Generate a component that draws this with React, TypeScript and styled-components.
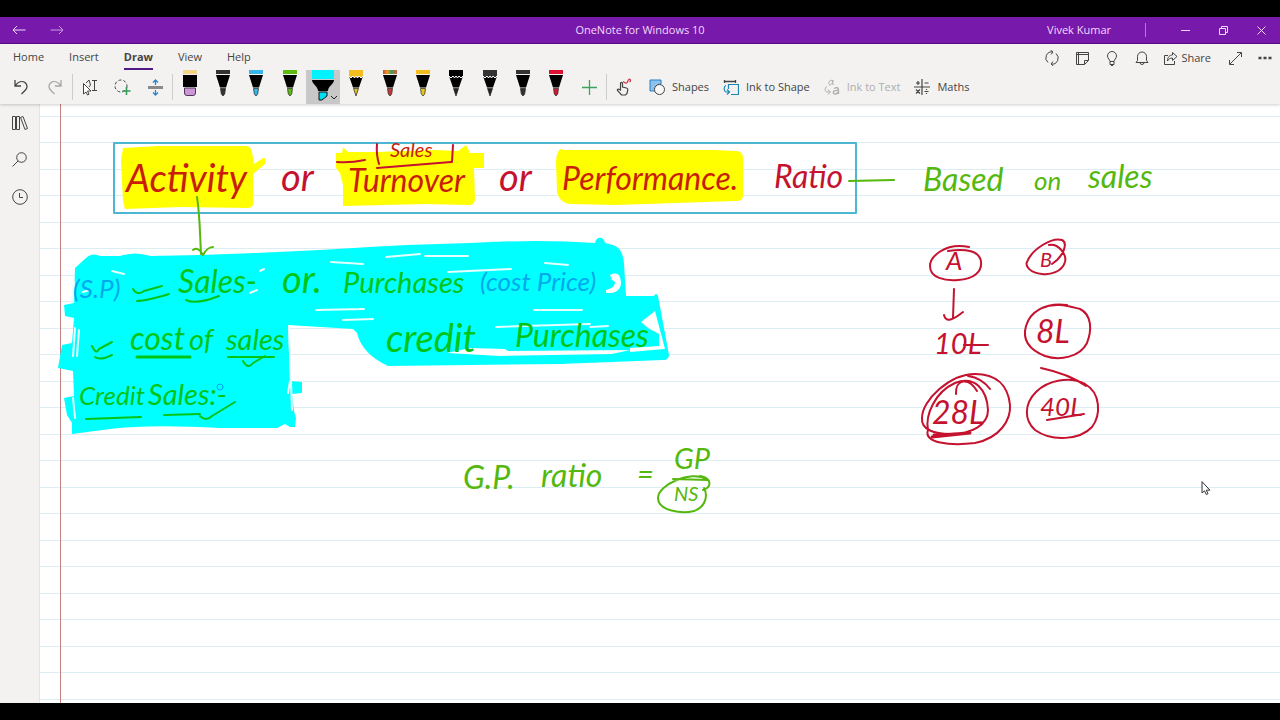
import React from "react";
import styled, { createGlobalStyle } from "styled-components";

const GlobalStyle = createGlobalStyle`
  * { box-sizing: border-box; }
  body { margin: 0; background: #000; }
  button { font: inherit; color: inherit; background: none; border: 0; padding: 0; margin: 0; }
  svg { display: block; flex: none; }
`;

const Screen = styled.div`
  min-height: 100vh;
  padding: 17px 0;
  display: flex;
  flex-direction: column;
  background: #000;
  color: #444;
  font: 11px/16px "Open Sans", "Noto Sans", sans-serif;
`;

const TitleBar = styled.header`
  display: grid;
  grid-template-columns: 1fr auto 1fr;
  align-items: center;
  height: 27px;
  background: #7719aa;
  border-bottom: 1px solid #5a0d86;
  color: #f3d9ff;
`;

const TitleSide = styled.div<{ $end?: boolean }>`
  display: flex;
  align-items: center;
  justify-content: ${(p) => (p.$end ? "flex-end" : "flex-start")};
`;

const AppTitle = styled.h1`
  margin: 0;
  font-size: 11px;
  font-weight: 400;
`;

const TitleButton = styled.button<{ $dim?: boolean }>`
  display: grid;
  place-items: center;
  width: 38px;
  height: 26px;
  opacity: ${(p) => (p.$dim ? 0.7 : 1)};
`;

const Account = styled.button`
  padding: 0 34px 0 0;
  border-right: 1px solid #b47ad2;
  margin-right: 20px;
  line-height: 14px;
`;

const Ribbon = styled.div`
  position: relative;
  background: #f3f2f1;
  box-shadow: 0 1px 3px #0003;
  z-index: 1;
`;

const RibbonRow = styled.div`
  display: flex;
  justify-content: space-between;
  height: 26px;
`;

const Tabs = styled.nav`
  display: flex;
  gap: 25px;
  padding-left: 13px;
`;

const Tab = styled.button<{ $active?: boolean }>`
  padding-top: 2px;
  font-weight: ${(p) => (p.$active ? 700 : 400)};
  border-bottom: 2px solid ${(p) => (p.$active ? "#4f1a84" : "transparent")};
`;

const Actions = styled.div`
  display: flex;
  align-items: center;
  padding-top: 2px;
`;

const IconButton = styled.button<{ $width?: number; $faded?: boolean }>`
  display: grid;
  place-items: center;
  width: ${(p) => p.$width ?? 30}px;
  height: 100%;
  color: ${(p) => (p.$faded ? "#a5a5a5" : "#444")};
`;

const ShareButton = styled.button`
  display: flex;
  align-items: center;
  gap: 3px;
  padding: 0 9px 0 7px;
`;

const ToolRow = styled.div`
  display: flex;
  height: 34px;
  padding-left: 4px;
`;

const Divider = styled.span`
  width: 1px;
  margin: 4px 0;
  background: #ccc;
`;

const Pens = styled.div`
  display: flex;
  width: 400px;
`;

const PenButton = styled.button<{ $selected?: boolean }>`
  position: relative;
  flex: 1;
  display: flex;
  justify-content: center;
  align-items: flex-start;
  background: ${(p) => (p.$selected ? "#c8c8c8" : "none")};
`;

const PenChevron = styled.svg`
  position: absolute;
  right: 2px;
  bottom: 3px;
`;

const ToolButton = styled.button`
  display: flex;
  align-items: center;
  gap: 7px;
  padding: 0 5px 0 9px;
  white-space: nowrap;
  &:disabled { color: #adadad; }
`;

const Workspace = styled.div`
  flex: 1;
  display: flex;
  min-height: 0;
`;

const Sidebar = styled.aside`
  flex: none;
  display: flex;
  flex-direction: column;
  align-items: center;
  width: 40px;
  background: #f3f2f1;
  border-right: 1px solid #e4e4e4;
`;

const SideButton = styled.button`
  display: grid;
  place-items: center;
  width: 100%;
  height: 37px;
`;

const NotePage = styled.main`
  flex: 1;
  min-width: 0;
  overflow: hidden;
  background:
    linear-gradient(#c8807c, #c8807c) 20px 0 / 1px 100% no-repeat,
    linear-gradient(#dcedf3 1px, transparent 1px) 0 12px / 100% 53px,
    linear-gradient(#dcedf3 1px, transparent 1px) 0 38px / 100% 53px,
    #fff;
`;

const Ink = styled.svg`
  fill: none;
  stroke-linecap: round;
  stroke-linejoin: round;
`;

const Word = styled.text<{ $size: number; $ink: string }>`
  font-family: Lato, "Open Sans", sans-serif;
  font-style: italic;
  font-size: ${(p) => p.$size}px;
  fill: ${(p) => p.$ink};
`;

type IconProps = { w?: number; h?: number; children: React.ReactNode };

const Icon = ({ w = 16, h = 16, children }: IconProps) => (
  <svg width={w} height={h} viewBox={`0 0 ${w} ${h}`} fill="none" stroke="currentColor" strokeWidth="1" aria-hidden="true">
    {children}
  </svg>
);

type PenKind = "eraser" | "pen" | "pencil" | "marker";
type PenSpec = { name: string; kind: PenKind; cap: string; tip: string };

const pens: PenSpec[] = [
  { name: "Eraser", kind: "eraser", cap: "#f3d68a", tip: "#cd97d6" },
  { name: "Black pen", kind: "pen", cap: "#333", tip: "#333" },
  { name: "Blue pen", kind: "pen", cap: "#38b5e6", tip: "#38b5e6" },
  { name: "Green pen", kind: "pen", cap: "#5dbb10", tip: "#5dbb10" },
  { name: "Cyan highlighter", kind: "marker", cap: "#00f4ff", tip: "#00dff0" },
  { name: "Yellow pencil", kind: "pencil", cap: "#f2bd1d", tip: "#e0c020" },
  { name: "Rainbow pen", kind: "pen", cap: "url(#rainbow)", tip: "#c33a3a" },
  { name: "Yellow pen", kind: "pen", cap: "#f2bd1d", tip: "#e8c61c" },
  { name: "Black pencil", kind: "pencil", cap: "#000", tip: "#222" },
  { name: "Grey pencil", kind: "pencil", cap: "#333", tip: "#222" },
  { name: "Dark pen", kind: "pen", cap: "#333", tip: "#333" },
  { name: "Red pen", kind: "pen", cap: "#e01233", tip: "#d01830" },
];

const PenPicture = ({ kind, cap, tip }: PenSpec) => {
  if (kind === "marker") {
    return (
      <svg width="26" height="32" viewBox="0 0 26 32" aria-hidden="true">
        <path d="M2 0h22v9H2z" fill={cap} />
        <path d="M2 10h22c0 4-6 6-6 11H8C8 16 2 14 2 10z" fill="#000" />
        <path d="M9 22h8v4l-5 4H9z" fill={tip} stroke="#111" />
      </svg>
    );
  }
  if (kind === "eraser") {
    return (
      <svg width="14" height="27" viewBox="0 0 14 27" aria-hidden="true">
        <path d="M0 0h14v4H0z" fill={cap} />
        <path d="M0 5h14v12H0z" fill="#000" />
        <path d="M1.500 18h11v5q0 2.500-2.500 2.500H4q-2.500 0-2.500-2.500z" fill={tip} stroke="#51355a" />
      </svg>
    );
  }
  return (
    <svg width="14" height="27" viewBox="0 0 14 27" aria-hidden="true">
      <defs>
        <linearGradient id="rainbow">
          <stop offset="0" stopColor="#e23b30" />
          <stop offset=".3" stopColor="#e0a020" />
          <stop offset=".6" stopColor="#3f9a60" />
          <stop offset="1" stopColor="#d9603a" />
        </linearGradient>
      </defs>
      <path d="M0 0h14v4H0z" fill={cap} />
      {kind === "pen" && <path d="M0 5h14l-4 12.500H4z" fill="#000" />}
      {kind === "pencil" && (
        <>
          <path d="M0 3h14v3l-4 11.500H4L0 6z" fill="#000" />
          <path d="M0 3h14v3l-2 2-2-2-1.500 2L7 6 5.500 8 4 6 2 8 0 6z" fill={cap} />
          <path d="M0 6l2 2 2-2 1.500 2L7 6l1.500 2L10 6l2 2 2-2" fill="none" stroke="#fff" />
        </>
      )}
      {kind === "pen" ? (
        <path d="M4.500 18.500h5l-.8 5.500-1.700 2-1.700-2z" fill={tip} stroke="#222" strokeWidth=".7" />
      ) : (
        <path d="M4.500 18.500h5L7 26z" fill={tip} stroke="#222" strokeWidth=".7" />
      )}
    </svg>
  );
};

const RED = "#c4122f";
const RED_ON_YELLOW = "#c81e0a";
const GREEN = "#55b80e";
const GREEN_ON_CYAN = "#00c416";
const BLUE_ON_CYAN = "#00a8ee";

type WordSpec = [text: string, x: number, y: number, size: number, ink: string];

const words: WordSpec[] = [
  ["Activity", 126, 192, 38, RED_ON_YELLOW],
  ["or", 281, 191, 38, RED],
  ["Sales", 390, 157, 20, RED_ON_YELLOW],
  ["Turnover", 348, 192, 32, RED_ON_YELLOW],
  ["or", 499, 191, 38, RED],
  ["Performance.", 562, 190, 32, RED_ON_YELLOW],
  ["Ratio", 774, 188, 32, RED],
  ["Based", 923, 191, 32, GREEN],
  ["on", 1034, 190, 26, GREEN],
  ["sales", 1088, 188, 32, GREEN],
  ["(S.P)", 73, 298, 26, BLUE_ON_CYAN],
  ["Sales-", 178, 293, 32, GREEN_ON_CYAN],
  ["or.", 282, 293, 38, GREEN_ON_CYAN],
  ["Purchases", 343, 293, 29, GREEN_ON_CYAN],
  ["(cost Price)", 480, 291, 26, BLUE_ON_CYAN],
  ["cost", 130, 350, 32, GREEN_ON_CYAN],
  ["of", 189, 350, 29, GREEN_ON_CYAN],
  ["sales", 226, 350, 29, GREEN_ON_CYAN],
  ["credit", 386, 352, 38, GREEN_ON_CYAN],
  ["Purchases", 515, 347, 32, GREEN_ON_CYAN],
  ["Credit", 79, 405, 26, GREEN_ON_CYAN],
  ["Sales:-", 148, 405, 29, GREEN_ON_CYAN],
  ["G.P.", 463, 489, 32, GREEN],
  ["ratio", 541, 487, 32, GREEN],
  ["=", 637, 484, 29, GREEN],
  ["GP", 674, 469, 29, GREEN],
  ["NS", 674, 501, 20, GREEN],
  ["A", 946, 270, 26, RED],
  ["B", 1040, 267, 20, RED],
  ["10L", 934, 354, 29, RED],
  ["8L", 1036, 343, 32, RED],
  ["28L", 932, 424, 32, RED],
  ["40L", 1040, 416, 26, RED],
];

const Handwriting = () => (
  <Ink width="1240" height="599" viewBox="40 104 1240 599" role="group" aria-label="Handwritten notes">
    <g fill="#ff0">
      <path d="M123 148l36-2 87 0q5 0 6 6l2 12 9-6 2 0v6l-12 10v30q0 4-6 4l-66-1-56 2-2-8-2-40z" />
      <path d="M336 153h6l1-6 5 5h28l60-2 22 1 8-6 4 8h14v15h-10l1 32q-1 5-6 5l-44-1-82 2V185l-3-12-4-5z" />
      <path d="M560 149l4 1 150 0 22 1q7 0 7 7v38q0 5-7 5l-61 2-60 2-43-1q-12 0-15-12l-1-30q0-8 4-13z" />
    </g>
    <g fill="#0ff">
      <path d="M75 268L86 258Q92 252 100 256L120 256Q135 251 150 256L200 255 256 253 320 250 370 247 407 245 470 243Q540 239 595 243C596 236 604 236 605 243L613 245Q623 248 624 264L626 296 654 296Q656 292 658 296L669 355Q669 360 663 360L560 364 388 366Q362 354 357 333L353 329 288 325 290 381 302 382 302 393 292 394 294 411 296 418 295 427 290 427 285 424 277 428 220 428Q150 424 110 429L72 434 72 423 67 415 64 398 74 396 73 371 58 368 62 345 72 343 74 318 65 316 64 305 74 303z" />
    </g>
    <g fill="#fff">
      <path d="M610 275Q620 270 621 282 621 294 606 293L606 290Q615 288 615 282L612 280z" />
      <path d="M655 311L641 322 648 328 659 334 659 346 630 348 630 352 665 349z" />
      <path d="M470 348L505 349 508 351 630 350 612 354 500 356 447 353z" />
    </g>
    <g stroke="#e4ffff" strokeWidth="2">
      <path d="M331 262l32 2M386 257l34-3M425 256l43 0M545 263l23 2M316 310l48-1M343 320l30-1M496 327l94-3M534 310l48 0M590 327l18-1M448 272l63-3M260 271l4-2M112 271l12 3M250 293l7-3M289 326l3 84M75 328l-2 28M79 330l-2 26M290 381l-2 12M83 292l6-2M74 282l-2 18M73 398l2 20" />
    </g>
    <path d="M114 143H856V213H114z" stroke="#4cb6d3" strokeWidth="2" />
    <g stroke={GREEN} strokeWidth="2">
      <path d="M197 197C200 216 200 236 201 254M193 250C197 247 200 250 203 255 205 251 209 247 213 247M849 181L894 180" />
      <path d="M673 479L708 480M707 479C690 470 658 485 658 498 658 511 682 514 694 511 706 507 708 495 704 488M700 476C712 478 712 487 703 490" />
    </g>
    <g stroke={GREEN_ON_CYAN} strokeWidth="2">
      <path d="M133 289Q137 296 144 291L162 286M137 301Q146 301 169 294M186 300Q196 305 219 296M92 346Q96 355 99 349L112 342M95 357Q100 361 112 355M228 357H274M243 361Q248 370 253 363L265 356M86 419L141 417M164 415L200 414M200 416Q206 422 212 416L235 402" />
      <path d="M137 357H190" strokeWidth="3" />
    </g>
    <circle cx="220" cy="387" r="3" stroke={BLUE_ON_CYAN} />
    <g stroke={RED} strokeWidth="2">
      <path d="M337 162Q350 163 365 160M377 144Q376 154 379 164M453 145L452 162M377 168L451 162" />
      <path d="M969 247C945 242 930 257 930 266 930 278 945 281 958 280 975 279 982 271 981 262 980 251 966 248 948 251" />
      <path d="M1049 245C1058 243 1067 254 1065 262 1062 272 1050 275 1042 274 1030 273 1025 266 1027 262 1032 249 1052 237 1062 240 1068 243 1064 256 1052 264" />
      <path d="M954 289L953 318M944 315C946 323 953 320 963 312M964 345H988" />
      <path d="M1042 308C1055 302 1068 306 1080 309 1092 315 1092 330 1087 343 1080 357 1060 361 1045 356 1030 350 1022 340 1026 326 1030 312 1045 302 1067 305" />
      <path d="M1041 368C1055 371 1072 376 1086 386M1085 384C1070 376 1048 380 1036 392 1024 404 1024 420 1035 430 1052 442 1080 440 1092 427 1101 415 1101 393 1085 384" />
      <path d="M1047 420L1084 414" />
      <path d="M928 430C923 443 950 446 975 443 1000 438 1011 420 1010 405 1008 385 996 374 975 374 950 374 922 400 922 418 921 430 935 434 950 434 972 434 988 425 988 410 987 390 975 375 955 383 935 392 925 415 928 430M956 394C955 380 968 376 977 391M968 376Q982 378 990 389" />
      <path d="M932 437L970 433M934 435L958 434" strokeWidth="3" />
    </g>
    {words.map(([text, x, y, size, ink]) => (
      <Word key={`${text}-${x}`} x={x} y={y} $size={size} $ink={ink}>
        {text}
      </Word>
    ))}
    <path d="M1202 482v11l2.500-2.200 1.800 3.700 1.700-.8-1.700-3.500h3.200z" fill="#fff" stroke="#333" />
  </Ink>
);

export default function App() {
  return (
    <Screen>
      <GlobalStyle />
      <TitleBar>
        <TitleSide>
          <TitleButton aria-label="Back">
            <Icon w={14} h={10}><path d="M13.500 5H1M5 1L1 5l4 4" /></Icon>
          </TitleButton>
          <TitleButton aria-label="Forward" $dim>
            <Icon w={14} h={10}><path d="M.5 5H13M9 1l4 4-4 4" /></Icon>
          </TitleButton>
        </TitleSide>
        <AppTitle>OneNote for Windows 10</AppTitle>
        <TitleSide $end>
          <Account>Vivek Kumar</Account>
          <TitleButton aria-label="Minimise">
            <Icon w={9} h={9}><path d="M0 4.500h9" /></Icon>
          </TitleButton>
          <TitleButton aria-label="Restore">
            <Icon w={9} h={9}><path d="M.5 2.500h6v6h-6zM2.500 2.500v-2h6v6h-2" /></Icon>
          </TitleButton>
          <TitleButton aria-label="Close">
            <Icon w={9} h={9}><path d="M.5.5l8 8M8.500.5l-8 8" /></Icon>
          </TitleButton>
        </TitleSide>
      </TitleBar>

      <Ribbon>
        <RibbonRow>
          <Tabs aria-label="Ribbon tabs">
            <Tab>Home</Tab>
            <Tab>Insert</Tab>
            <Tab $active aria-current="page">Draw</Tab>
            <Tab>View</Tab>
            <Tab>Help</Tab>
          </Tabs>
          <Actions>
            <IconButton aria-label="Sync">
              <Icon>
                <path d="M9 2A6 6 0 0 0 4 12.500M6.500 0L9 2 7 4.500M7 14A6 6 0 0 0 12 3.500M9.500 16L7 14l2-2.500" />
              </Icon>
            </IconButton>
            <IconButton aria-label="Feed">
              <Icon w={13} h={13}><path d="M.5.5h12v8l-4 4h-8zM8.500 12.500v-4h4M.5 2.500h12M2.500.5v12" /></Icon>
            </IconButton>
            <IconButton aria-label="Tell me">
              <Icon w={12} h={15}><path d="M4 10.500c0-2-2.500-2.800-2.500-5.500a4.500 4.500 0 0 1 9 0c0 2.700-2.500 3.500-2.500 5.500zM4 10.500v3h4v-3M5 14.500h2" /></Icon>
            </IconButton>
            <IconButton aria-label="Notifications">
              <Icon w={14} h={15}><path d="M1 11.500l1.500-2V5.500a4.500 4.500 0 0 1 9 0v4l1.500 2zM5 11.500a2 2 0 0 0 4 0" /></Icon>
            </IconButton>
            <ShareButton>
              <Icon w={14} h={14}><path d="M4 4.500H.5v9h10V10M8.500 1.500l4.500 4-4.500 4V7C6 7 4.500 8 3.500 10c0-4 2-5.800 5-6z" /></Icon>
              Share
            </ShareButton>
            <IconButton aria-label="Full screen">
              <Icon w={13} h={13}><path d="M.8 12.200L12.200.8M8 .5h4.500V5M.5 8v4.500H5" /></Icon>
            </IconButton>
            <IconButton aria-label="More options">
              <Icon w={14} h={4}><path d="M.5 2h3M5.500 2h3M10.500 2h3" strokeWidth="2.600" /></Icon>
            </IconButton>
          </Actions>
        </RibbonRow>

        <ToolRow role="toolbar" aria-label="Draw tools">
          <IconButton aria-label="Undo" $width={34}>
            <Icon w={16} h={18}><path d="M2 2v6h6M2.200 7.800C5 4 9 2.500 12 4.500c3 2.500 2.500 5.500 0 8L8.500 16" strokeWidth="1.300" /></Icon>
          </IconButton>
          <IconButton aria-label="Redo" $width={34} $faded>
            <Icon w={16} h={18}><path d="M14 2v6H8M13.800 7.800C11 4 7 2.500 4 4.500c-3 2.500-2.500 5.500 0 8L7.500 16" strokeWidth="1.300" /></Icon>
          </IconButton>
          <Divider />
          <IconButton aria-label="Select objects or type text" $width={33}>
            <Icon w={18} h={17}>
              <path d="M2.500 4.500v10.500l2.500-2 1.500 3 1.500-.8L6.500 12H10z" fill="#fff" />
              <path d="M11 1.500h5M11 11.500h5M13.500 1.500v10M5 4l3-3 1.500 5L8 8" />
            </Icon>
          </IconButton>
          <IconButton aria-label="Lasso select" $width={33}>
            <Icon w={17} h={17}>
              <circle cx="7" cy="7" r="6" strokeDasharray="3 2" />
              <path d="M12.500 8v8M8.500 12h8" stroke="#2f9a58" strokeWidth="1.500" />
            </Icon>
          </IconButton>
          <IconButton aria-label="Insert space" $width={33}>
            <Icon w={15} h={17}>
              <path d="M0 8.500h15" stroke="#8a8a8a" strokeWidth="3" />
              <path d="M7.500 6V1M5 3.500L7.500 1 10 3.500M7.500 11v5M5 13.500L7.500 16l2.500-2.500" stroke="#2b83c9" strokeWidth="1.300" />
            </Icon>
          </IconButton>
          <Divider />
          <Pens>
            {pens.map((pen) => (
              <PenButton key={pen.name} aria-label={pen.name} $selected={pen.kind === "marker"}>
                <PenPicture {...pen} />
                {pen.kind === "marker" && (
                  <PenChevron width="8" height="6" viewBox="0 0 8 6" fill="none" stroke="#222">
                    <path d="M1 1l3 3 3-3" />
                  </PenChevron>
                )}
              </PenButton>
            ))}
          </Pens>
          <IconButton aria-label="Add pen" $width={33}>
            <Icon w={15} h={15}><path d="M7.500 0v15M0 7.500h15" stroke="#3fa35c" strokeWidth="1.300" /></Icon>
          </IconButton>
          <Divider />
          <IconButton aria-label="Draw with mouse or touch" $width={33}>
            <Icon w={17} h={18}>
              <path d="M5.500 12V5.500q0-1.200 1-1.200t1 1.200V9l4 1q1.500.5 1.300 2l-.8 3.500-1.500 1.500H6.500L2.500 12.500q-.5-1.500 1-1.500z" strokeWidth="1.200" />
              <path d="M8 3.500C11 6 12 5 12.500 4 13 1 15 .5 15.500 2q.2 1.500-1 2" stroke="#d23a4c" strokeWidth="1.300" />
            </Icon>
          </IconButton>
          <ToolButton>
            <Icon>
              <path d="M1 1h11v4a6 6 0 0 0-6 7H1z" fill="#8cc2ec" stroke="#2b7fc0" />
              <circle cx="10.500" cy="10.500" r="5" fill="#f9f9f9" />
            </Icon>
            Shapes
          </ToolButton>
          <ToolButton>
            <Icon>
              <path d="M1 2.500h12M1.500 1v3M12.500 1v3" strokeWidth="1.300" />
              <path d="M5.500 10V5.500h10v10H8M3 6.500c-2.500 1-2.500 5.500 0 6.500h3M4 10.500L6.500 13 4 15.500" stroke="#1d87b9" strokeWidth="1.200" />
            </Icon>
            Ink to Shape
          </ToolButton>
          <ToolButton disabled>
            <Icon>
              <path d="M9 1.500C6 .5 4 3 5 5.500 6.500 7 8 5 9 1.500L8.500 5q.5 1.500 1.500 0M3 7.500c-2.500 1-2.500 5 0 5.500h3M4 10.500L6.500 13 4 15.500" />
              <path d="M10 9.500q4-2 4.500 1V15M14.500 11.500c-7-.5-6 4-3 3.500q2.500-.5 3-2.500" strokeWidth="1.300" />
            </Icon>
            Ink to Text
          </ToolButton>
          <ToolButton>
            <Icon>
              <path d="M8 0v16M0 8h16M4 2v4M2 4h4M10.500 4h4M2 10.500l4 4M6 10.500l-4 4M10.500 12.500h4M12.500 10v1M12.500 14v1" strokeWidth="1.200" />
            </Icon>
            Maths
          </ToolButton>
        </ToolRow>
      </Ribbon>

      <Workspace>
        <Sidebar>
          <SideButton aria-label="Notebooks">
            <Icon w={16} h={14}><path d="M.5.5h3v13h-3zM4.500.5h3v13h-3zM8.500 1.500l2.500-1 4.500 12-2.500 1z" /></Icon>
          </SideButton>
          <SideButton aria-label="Search">
            <Icon w={15} h={15}><circle cx="9.500" cy="5.500" r="4.800" /><path d="M6 9L.5 14.500" /></Icon>
          </SideButton>
          <SideButton aria-label="Recent notes">
            <Icon><circle cx="8" cy="8" r="7.300" /><path d="M7.500 4v4.500H11" /></Icon>
          </SideButton>
        </Sidebar>
        <NotePage>
          <Handwriting />
        </NotePage>
      </Workspace>
    </Screen>
  );
}
